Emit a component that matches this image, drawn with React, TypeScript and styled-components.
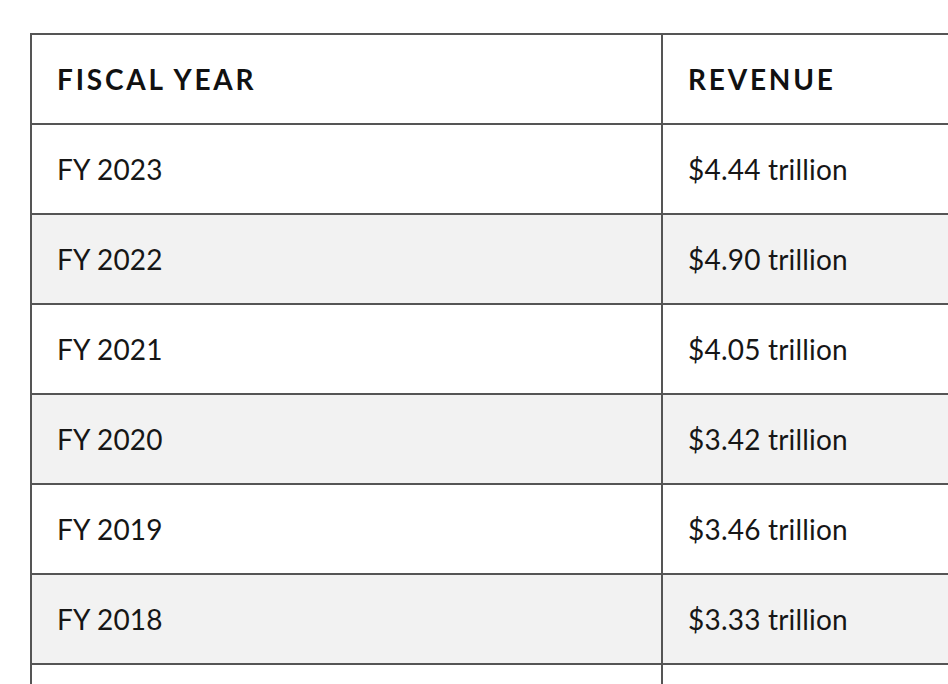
import React from "react";
import styled, { createGlobalStyle } from "styled-components";

const GlobalStyle = createGlobalStyle`
  html, body {
    margin: 0;
    padding: 0;
    background: #ffffff;
    overflow: hidden;
  }
  body {
    font-family: Lato, "Noto Sans", "Liberation Sans", sans-serif;
    color: #111111;
  }
`;

const Page = styled.div`
  width: 948px;
  height: 684px;
  overflow: hidden;
  padding: 33px 0 0 30px;
  box-sizing: border-box;
`;

const Table = styled.table`
  width: 1264px;
  border-collapse: collapse;
  table-layout: fixed;
`;

const HeadCell = styled.th`
  height: 88px;
  padding: 0 25px;
  border: 2px solid #555555;
  text-align: left;
  font-size: 28px;
  font-weight: 700;
  letter-spacing: 2.8px;
  text-transform: uppercase;
  color: #111111;
`;

const Row = styled.tr<{ $shaded: boolean }>`
  background: ${(p) => (p.$shaded ? "#f2f2f2" : "#ffffff")};
`;

const Cell = styled.td`
  height: 88px;
  padding: 0 25px;
  border: 2px solid #555555;
  font-size: 28px;
  font-weight: 400;
  letter-spacing: 0.2px;
  color: #161616;
  vertical-align: middle;
`;

const rows = [
  { year: "FY 2023", revenue: "$4.44 trillion" },
  { year: "FY 2022", revenue: "$4.90 trillion" },
  { year: "FY 2021", revenue: "$4.05 trillion" },
  { year: "FY 2020", revenue: "$3.42 trillion" },
  { year: "FY 2019", revenue: "$3.46 trillion" },
  { year: "FY 2018", revenue: "$3.33 trillion" },
  { year: "FY 2017", revenue: "$3.32 trillion" },
];

export default function App() {
  return (
    <Page>
      <GlobalStyle />
      <Table>
        <thead>
          <tr>
            <HeadCell>Fiscal Year</HeadCell>
            <HeadCell>Revenue</HeadCell>
          </tr>
        </thead>
        <tbody>
          {rows.map((r, i) => (
            <Row key={r.year} $shaded={i % 2 === 1}>
              <Cell>{r.year}</Cell>
              <Cell>{r.revenue}</Cell>
            </Row>
          ))}
        </tbody>
      </Table>
    </Page>
  );
}
